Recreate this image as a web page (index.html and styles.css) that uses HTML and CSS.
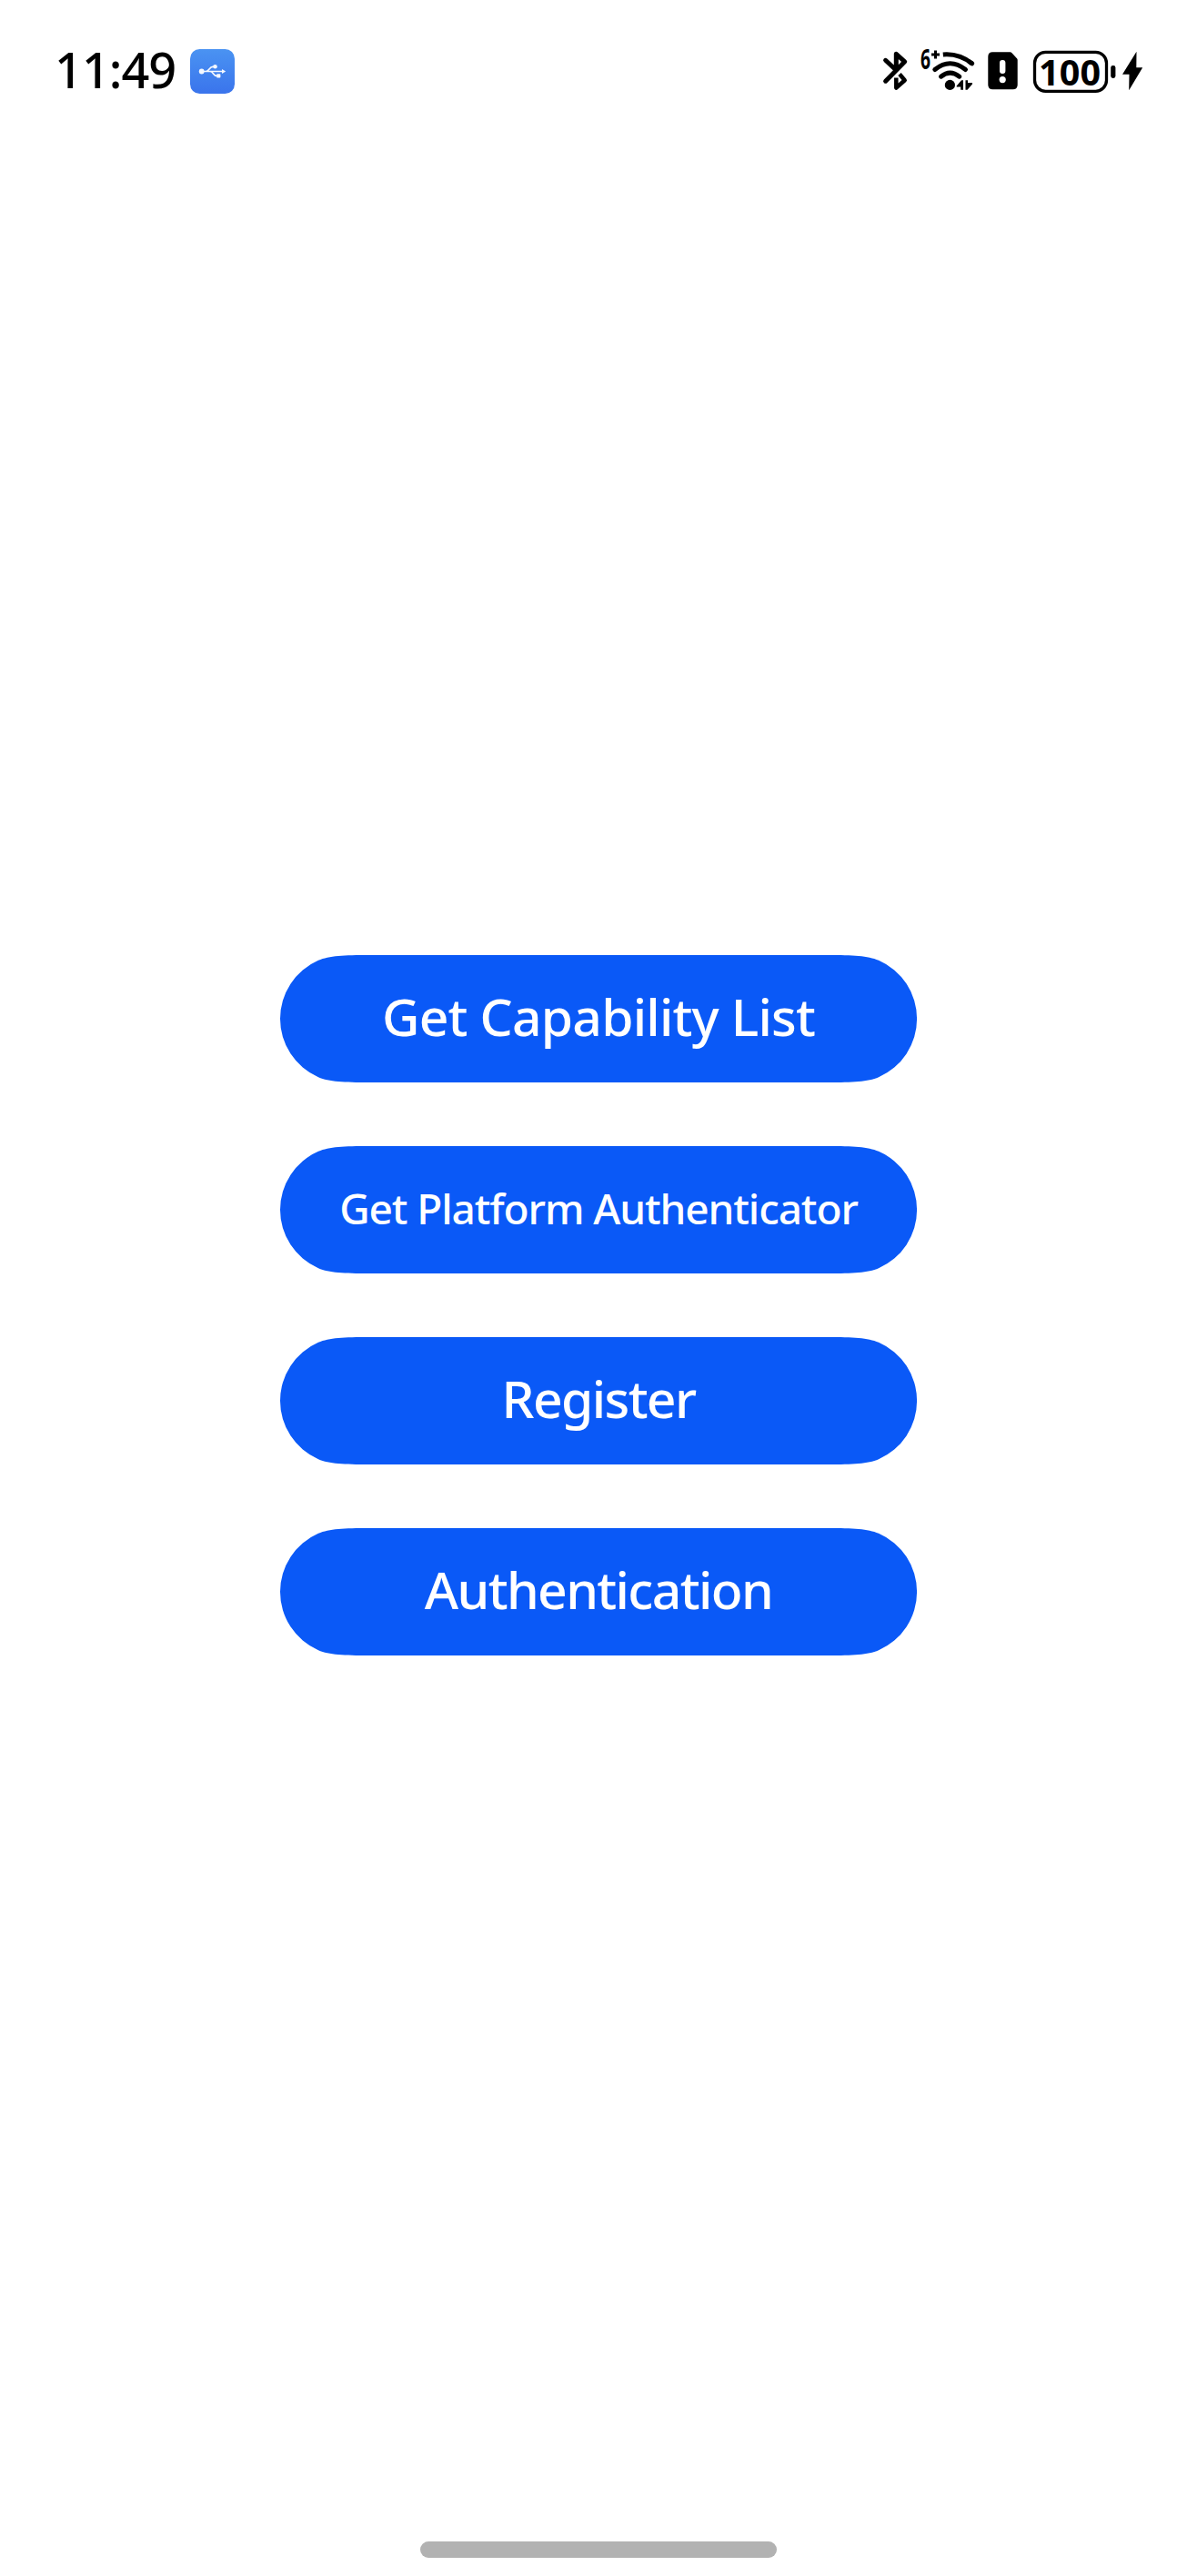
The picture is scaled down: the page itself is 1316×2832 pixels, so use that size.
FILE: index.html
```html
<!DOCTYPE html>
<html lang="en">
<head>
<meta charset="utf-8">
<title>Authenticator</title>
<link rel="stylesheet" href="styles.css">
</head>
<body>
<header class="status">
  <span class="time">11:49</span>
  <svg class="usb" width="49" height="49" viewBox="209 54 49 49">
    <defs><linearGradient id="g" x1="0" y1="0" x2="0" y2="1"><stop offset="0" stop-color="#4a93f2"/><stop offset="1" stop-color="#3a74ec"/></linearGradient></defs>
    <rect x="209" y="54" width="49" height="49" rx="10.500" fill="url(#g)"/>
    <g fill="none" stroke="#f4f8ff" stroke-width="1.700"><path d="M222 78.500H245M226 78.500C230 78.500 230 73.500 234 73.300H236M231 78.500C234.500 78.500 234.500 83.300 238 83.300H240"/></g>
    <g fill="#f4f8ff"><circle cx="221.700" cy="78.500" r="2.900"/><circle cx="236.500" cy="73.200" r="2.300"/><rect x="238.200" y="81.300" width="4.200" height="4.200" rx=".8"/><path d="M244 76L248.200 78.500L244 81Z"/></g>
  </svg>
  <div class="icons">
    <svg width="34" height="56" viewBox="968 50 34 56" fill="none" stroke="#000" stroke-width="5" stroke-linecap="round" stroke-linejoin="round"><path d="M973.600 66.300L985.300 77.300V59.300L994.700 67.800L973.600 89.200"/><path d="M989 81.500L994.700 88.200L985.300 96.500V85.500" stroke-width="4.500" stroke-linecap="butt"/></svg>
    <svg width="64" height="72" viewBox="1010 42 64 72">
      <text class="gen" x="1012" y="76" textLength="11" lengthAdjust="spacingAndGlyphs">6</text>
      <path d="M1024 60H1033M1028.500 55.500V64.500" stroke="#000" stroke-width="3"/>
      <g fill="none" stroke="#000" stroke-width="5" stroke-linecap="round"><path d="M1034.500 84.200Q1044.500 76 1054.800 84.200M1027.800 76.500Q1044.500 63 1061.500 76.500"/><path d="M1036.800 60Q1054.500 58.500 1068.800 70" stroke-linecap="butt"/><path d="M1066 68L1068.600 69.800"/></g>
      <circle cx="1044.400" cy="93.400" r="5.600"/>
      <path d="M1051.700 94.500L1057 88.200H1059V98.800H1056.200V95.500H1051.700ZM1061.500 98.800V88.200H1064V91H1069V92.500L1063.500 98.800Z"/>
    </svg>
    <svg width="38" height="56" viewBox="1084 50 38 56"><path d="M1091.300 57.300H1110.500Q1111.700 57.300 1112.500 58.200L1118 64.300Q1118.700 65 1118.700 66V93.300Q1118.700 98.300 1113.700 98.300H1091.300Q1086.300 98.300 1086.300 93.300V62.300Q1086.300 57.300 1091.300 57.300Z"/><rect x="1099" y="66" width="6.400" height="15" rx="3" fill="#fff"/><circle cx="1102.200" cy="87.600" r="3.600" fill="#fff"/></svg>
    <svg width="96" height="56" viewBox="1134 50 96 56"><rect x="1137.500" y="57.300" width="79" height="43" rx="12" fill="none" stroke="#000" stroke-width="3.300"/><text class="level" x="1142" y="93.600" textLength="68" lengthAdjust="spacing">100</text><rect x="1221.200" y="72" width="5.200" height="14" rx="2.400"/></svg>
    <svg width="28" height="56" viewBox="1232 50 28 56"><path d="M1249.500 56.700L1234 81.700H1241.500L1241.200 99.300L1256.200 74.200H1249.300Z"/></svg>
  </div>
</header>
<main class="actions">
  <button class="btn cap">Get Capability List</button>
  <button class="btn small">Get Platform Authenticator</button>
  <button class="btn reg">Register</button>
  <button class="btn auth">Authentication</button>
</main>
<footer class="home"><div class="handle"></div></footer>
</body>
</html>
```
FILE: styles.css
```css
* { box-sizing: border-box; }
body {
  margin: 0;
  min-height: 2832px;
  background: #fff;
  color: #000;
  font-family: "Noto Sans", "Open Sans", sans-serif;
  display: flex;
  flex-direction: column;
}
svg { display: block; }
.status {
  height: 156px;
  padding: 0 56px 0 60px;
  display: flex;
  align-items: center;
}
.time {
  width: 149px;
  padding-bottom: 4px;
  font-size: 54px;
  font-weight: 500;
  line-height: 56px;
  letter-spacing: -1px;
}
.usb { flex: none; }
.icons { margin-left: auto; display: flex; align-items: center; }
.icons svg:nth-child(2) { margin-left: 8px; }
.icons svg:nth-child(3) { margin-left: 10px; }
.icons svg:nth-child(4) { margin-left: 12px; }
.icons svg:nth-child(5) { margin-left: 2px; }
.gen { font: 700 31px "Noto Sans", sans-serif; }
.level { font: 700 39.5px "Noto Sans", sans-serif; }
.actions {
  padding-top: 894px;
  display: flex;
  flex-direction: column;
  align-items: center;
  gap: 70px;
}
.btn {
  width: 700px;
  height: 140px;
  border: 0;
  padding: 0 0 6px;
  background: #0a59f7;
  color: #fff;
  font: 500 57px/76px "Noto Sans", "Open Sans", sans-serif;
  white-space: nowrap;
  clip-path: path("M0 70A70 70 0 0 1 42 5.800C54 .8 70 0 98 0H602C630 0 646 .8 658 5.800A70 70 0 0 1 658 134.200C646 139.200 630 140 602 140H98C70 140 54 139.200 42 134.200A70 70 0 0 1 0 70Z");
}
.cap { letter-spacing: -0.8px; }
.small { font-size: 46px; letter-spacing: -1.1px; padding-bottom: 4px; }
.reg { letter-spacing: -1.6px; }
.auth { letter-spacing: -1.6px; }
.home {
  margin-top: auto;
  padding-bottom: 20px;
  display: flex;
  justify-content: center;
}
.handle {
  width: 392px;
  height: 18px;
  border-radius: 9px;
  background: #b2b2b2;
}
```
